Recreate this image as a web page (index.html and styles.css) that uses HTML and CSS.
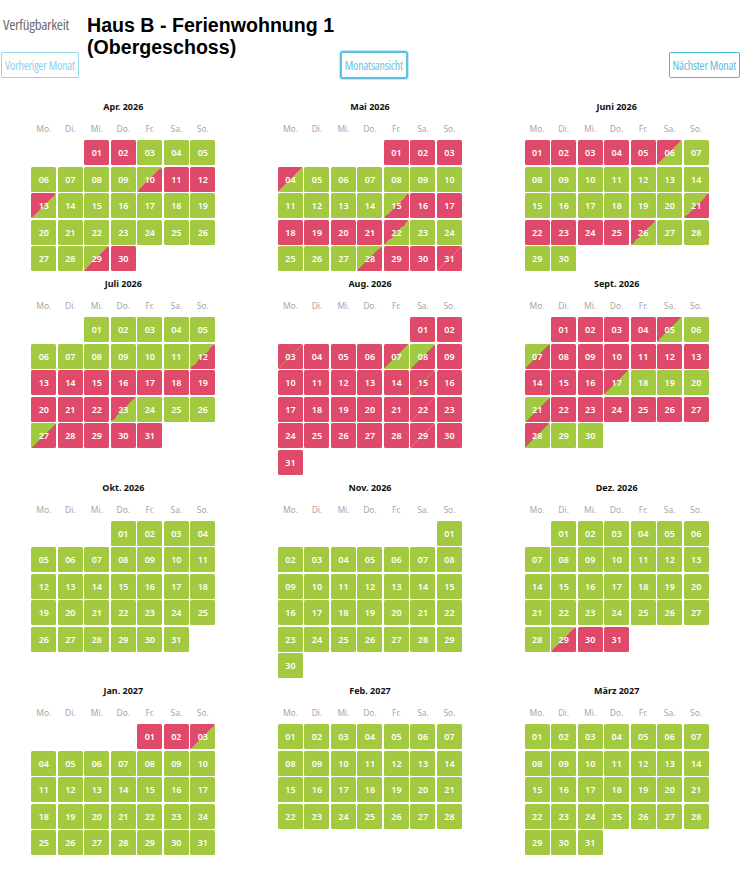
FILE: index.html
```html
<!DOCTYPE html>
<html lang="de">
<head>
<meta charset="utf-8">
<title>Verfügbarkeit</title>
<link rel="stylesheet" href="styles.css">
</head>
<body>
<header class="top">
  <div class="label">Verfügbarkeit</div>
  <h1 class="title">Haus B - Ferienwohnung 1 (Obergeschoss)</h1>
</header>
<nav class="nav">
  <button class="btn btn-prev">Vorheriger Monat</button>
  <button class="btn btn-view">Monatsansicht</button>
  <button class="btn btn-next">Nächster Monat</button>
</nav>
<main class="months">

<section class="month">
  <h2 class="m-title">Apr. 2026</h2>
  <div class="wd"><span>Mo.</span><span>Di.</span><span>Mi.</span><span>Do.</span><span>Fr.</span><span>Sa.</span><span>So.</span></div>
  <div class="days">
    <span class="r c3">01</span><span class="r">02</span><span class="g">03</span><span class="g">04</span><span class="g">05</span>
    <span class="g">06</span><span class="g">07</span><span class="g">08</span><span class="g">09</span><span class="a">10</span><span class="r">11</span><span class="r">12</span>
    <span class="d">13</span><span class="g">14</span><span class="g">15</span><span class="g">16</span><span class="g">17</span><span class="g">18</span><span class="g">19</span>
    <span class="g">20</span><span class="g">21</span><span class="g">22</span><span class="g">23</span><span class="g">24</span><span class="g">25</span><span class="g">26</span>
    <span class="g">27</span><span class="g">28</span><span class="a">29</span><span class="r">30</span>
  </div>
</section>

<section class="month">
  <h2 class="m-title">Mai 2026</h2>
  <div class="wd"><span>Mo.</span><span>Di.</span><span>Mi.</span><span>Do.</span><span>Fr.</span><span>Sa.</span><span>So.</span></div>
  <div class="days">
    <span class="r c5">01</span><span class="r">02</span><span class="r">03</span>
    <span class="d">04</span><span class="g">05</span><span class="g">06</span><span class="g">07</span><span class="g">08</span><span class="g">09</span><span class="g">10</span>
    <span class="g">11</span><span class="g">12</span><span class="g">13</span><span class="g">14</span><span class="a">15</span><span class="r">16</span><span class="r">17</span>
    <span class="r">18</span><span class="r">19</span><span class="r">20</span><span class="r">21</span><span class="d">22</span><span class="g">23</span><span class="g">24</span>
    <span class="g">25</span><span class="g">26</span><span class="g">27</span><span class="a">28</span><span class="r">29</span><span class="r">30</span><span class="x">31</span>
  </div>
</section>

<section class="month">
  <h2 class="m-title">Juni 2026</h2>
  <div class="wd"><span>Mo.</span><span>Di.</span><span>Mi.</span><span>Do.</span><span>Fr.</span><span>Sa.</span><span>So.</span></div>
  <div class="days">
    <span class="r">01</span><span class="r">02</span><span class="r">03</span><span class="r">04</span><span class="r">05</span><span class="d">06</span><span class="g">07</span>
    <span class="g">08</span><span class="g">09</span><span class="g">10</span><span class="g">11</span><span class="g">12</span><span class="g">13</span><span class="g">14</span>
    <span class="g">15</span><span class="g">16</span><span class="g">17</span><span class="g">18</span><span class="g">19</span><span class="g">20</span><span class="a">21</span>
    <span class="r">22</span><span class="r">23</span><span class="r">24</span><span class="r">25</span><span class="d">26</span><span class="g">27</span><span class="g">28</span>
    <span class="g">29</span><span class="g">30</span>
  </div>
</section>

<section class="month">
  <h2 class="m-title">Juli 2026</h2>
  <div class="wd"><span>Mo.</span><span>Di.</span><span>Mi.</span><span>Do.</span><span>Fr.</span><span>Sa.</span><span>So.</span></div>
  <div class="days">
    <span class="g c3">01</span><span class="g">02</span><span class="g">03</span><span class="g">04</span><span class="g">05</span>
    <span class="g">06</span><span class="g">07</span><span class="g">08</span><span class="g">09</span><span class="g">10</span><span class="g">11</span><span class="a">12</span>
    <span class="r">13</span><span class="r">14</span><span class="r">15</span><span class="r">16</span><span class="r">17</span><span class="r">18</span><span class="r">19</span>
    <span class="r">20</span><span class="r">21</span><span class="r">22</span><span class="d">23</span><span class="g">24</span><span class="g">25</span><span class="g">26</span>
    <span class="a">27</span><span class="r">28</span><span class="r">29</span><span class="r">30</span><span class="r">31</span>
  </div>
</section>

<section class="month">
  <h2 class="m-title">Aug. 2026</h2>
  <div class="wd"><span>Mo.</span><span>Di.</span><span>Mi.</span><span>Do.</span><span>Fr.</span><span>Sa.</span><span>So.</span></div>
  <div class="days">
    <span class="r c6">01</span><span class="r">02</span>
    <span class="x">03</span><span class="r">04</span><span class="r">05</span><span class="r">06</span><span class="d">07</span><span class="a">08</span><span class="r">09</span>
    <span class="r">10</span><span class="r">11</span><span class="r">12</span><span class="r">13</span><span class="r">14</span><span class="x">15</span><span class="r">16</span>
    <span class="r">17</span><span class="r">18</span><span class="r">19</span><span class="r">20</span><span class="r">21</span><span class="x">22</span><span class="r">23</span>
    <span class="r">24</span><span class="r">25</span><span class="r">26</span><span class="r">27</span><span class="r">28</span><span class="x">29</span><span class="r">30</span>
    <span class="r">31</span>
  </div>
</section>

<section class="month">
  <h2 class="m-title">Sept. 2026</h2>
  <div class="wd"><span>Mo.</span><span>Di.</span><span>Mi.</span><span>Do.</span><span>Fr.</span><span>Sa.</span><span>So.</span></div>
  <div class="days">
    <span class="r c2">01</span><span class="r">02</span><span class="r">03</span><span class="r">04</span><span class="d">05</span><span class="g">06</span>
    <span class="a">07</span><span class="r">08</span><span class="r">09</span><span class="r">10</span><span class="r">11</span><span class="r">12</span><span class="r">13</span>
    <span class="r">14</span><span class="r">15</span><span class="r">16</span><span class="d">17</span><span class="g">18</span><span class="g">19</span><span class="g">20</span>
    <span class="a">21</span><span class="r">22</span><span class="r">23</span><span class="r">24</span><span class="r">25</span><span class="r">26</span><span class="r">27</span>
    <span class="d">28</span><span class="g">29</span><span class="g">30</span>
  </div>
</section>

<section class="month">
  <h2 class="m-title">Okt. 2026</h2>
  <div class="wd"><span>Mo.</span><span>Di.</span><span>Mi.</span><span>Do.</span><span>Fr.</span><span>Sa.</span><span>So.</span></div>
  <div class="days">
    <span class="g c4">01</span><span class="g">02</span><span class="g">03</span><span class="g">04</span>
    <span class="g">05</span><span class="g">06</span><span class="g">07</span><span class="g">08</span><span class="g">09</span><span class="g">10</span><span class="g">11</span>
    <span class="g">12</span><span class="g">13</span><span class="g">14</span><span class="g">15</span><span class="g">16</span><span class="g">17</span><span class="g">18</span>
    <span class="g">19</span><span class="g">20</span><span class="g">21</span><span class="g">22</span><span class="g">23</span><span class="g">24</span><span class="g">25</span>
    <span class="g">26</span><span class="g">27</span><span class="g">28</span><span class="g">29</span><span class="g">30</span><span class="g">31</span>
  </div>
</section>

<section class="month">
  <h2 class="m-title">Nov. 2026</h2>
  <div class="wd"><span>Mo.</span><span>Di.</span><span>Mi.</span><span>Do.</span><span>Fr.</span><span>Sa.</span><span>So.</span></div>
  <div class="days">
    <span class="g c7">01</span>
    <span class="g">02</span><span class="g">03</span><span class="g">04</span><span class="g">05</span><span class="g">06</span><span class="g">07</span><span class="g">08</span>
    <span class="g">09</span><span class="g">10</span><span class="g">11</span><span class="g">12</span><span class="g">13</span><span class="g">14</span><span class="g">15</span>
    <span class="g">16</span><span class="g">17</span><span class="g">18</span><span class="g">19</span><span class="g">20</span><span class="g">21</span><span class="g">22</span>
    <span class="g">23</span><span class="g">24</span><span class="g">25</span><span class="g">26</span><span class="g">27</span><span class="g">28</span><span class="g">29</span>
    <span class="g">30</span>
  </div>
</section>

<section class="month">
  <h2 class="m-title">Dez. 2026</h2>
  <div class="wd"><span>Mo.</span><span>Di.</span><span>Mi.</span><span>Do.</span><span>Fr.</span><span>Sa.</span><span>So.</span></div>
  <div class="days">
    <span class="g c2">01</span><span class="g">02</span><span class="g">03</span><span class="g">04</span><span class="g">05</span><span class="g">06</span>
    <span class="g">07</span><span class="g">08</span><span class="g">09</span><span class="g">10</span><span class="g">11</span><span class="g">12</span><span class="g">13</span>
    <span class="g">14</span><span class="g">15</span><span class="g">16</span><span class="g">17</span><span class="g">18</span><span class="g">19</span><span class="g">20</span>
    <span class="g">21</span><span class="g">22</span><span class="g">23</span><span class="g">24</span><span class="g">25</span><span class="g">26</span><span class="g">27</span>
    <span class="g">28</span><span class="a">29</span><span class="r">30</span><span class="r">31</span>
  </div>
</section>

<section class="month">
  <h2 class="m-title">Jan. 2027</h2>
  <div class="wd"><span>Mo.</span><span>Di.</span><span>Mi.</span><span>Do.</span><span>Fr.</span><span>Sa.</span><span>So.</span></div>
  <div class="days">
    <span class="r c5">01</span><span class="r">02</span><span class="d">03</span>
    <span class="g">04</span><span class="g">05</span><span class="g">06</span><span class="g">07</span><span class="g">08</span><span class="g">09</span><span class="g">10</span>
    <span class="g">11</span><span class="g">12</span><span class="g">13</span><span class="g">14</span><span class="g">15</span><span class="g">16</span><span class="g">17</span>
    <span class="g">18</span><span class="g">19</span><span class="g">20</span><span class="g">21</span><span class="g">22</span><span class="g">23</span><span class="g">24</span>
    <span class="g">25</span><span class="g">26</span><span class="g">27</span><span class="g">28</span><span class="g">29</span><span class="g">30</span><span class="g">31</span>
  </div>
</section>

<section class="month">
  <h2 class="m-title">Feb. 2027</h2>
  <div class="wd"><span>Mo.</span><span>Di.</span><span>Mi.</span><span>Do.</span><span>Fr.</span><span>Sa.</span><span>So.</span></div>
  <div class="days">
    <span class="g">01</span><span class="g">02</span><span class="g">03</span><span class="g">04</span><span class="g">05</span><span class="g">06</span><span class="g">07</span>
    <span class="g">08</span><span class="g">09</span><span class="g">10</span><span class="g">11</span><span class="g">12</span><span class="g">13</span><span class="g">14</span>
    <span class="g">15</span><span class="g">16</span><span class="g">17</span><span class="g">18</span><span class="g">19</span><span class="g">20</span><span class="g">21</span>
    <span class="g">22</span><span class="g">23</span><span class="g">24</span><span class="g">25</span><span class="g">26</span><span class="g">27</span><span class="g">28</span>
  </div>
</section>

<section class="month">
  <h2 class="m-title">März 2027</h2>
  <div class="wd"><span>Mo.</span><span>Di.</span><span>Mi.</span><span>Do.</span><span>Fr.</span><span>Sa.</span><span>So.</span></div>
  <div class="days">
    <span class="g">01</span><span class="g">02</span><span class="g">03</span><span class="g">04</span><span class="g">05</span><span class="g">06</span><span class="g">07</span>
    <span class="g">08</span><span class="g">09</span><span class="g">10</span><span class="g">11</span><span class="g">12</span><span class="g">13</span><span class="g">14</span>
    <span class="g">15</span><span class="g">16</span><span class="g">17</span><span class="g">18</span><span class="g">19</span><span class="g">20</span><span class="g">21</span>
    <span class="g">22</span><span class="g">23</span><span class="g">24</span><span class="g">25</span><span class="g">26</span><span class="g">27</span><span class="g">28</span>
    <span class="g">29</span><span class="g">30</span><span class="g">31</span>
  </div>
</section>

</main>
</body>
</html>
```
FILE: styles.css
```css
html, body {
  margin: 0;
  padding: 0;
  background: #fff;
}

body {
  width: 743px;
  font-family: "Noto Sans", "Liberation Sans", sans-serif;
}

.top {
  display: flex;
  align-items: flex-start;
  padding-top: 14px;
}

.label {
  width: 84px;
  padding-left: 3px;
  margin-top: 2px;
  font-family: "Open Sans", sans-serif;
  font-stretch: 75%;
  font-size: 15px;
  line-height: 17px;
  letter-spacing: -0.3px;
  color: #6d6d6d;
}

.title {
  width: 300px;
  margin: 0 0 -7px 0;
  font-family: "Liberation Sans", Arial, sans-serif;
  font-size: 19.6px;
  line-height: 22px;
  font-weight: bold;
  color: #000;
}

.nav {
  display: flex;
  justify-content: space-between;
  align-items: center;
  height: 28px;
  padding: 0 3px 0 1px;
}

.btn {
  box-sizing: border-box;
  height: 26px;
  padding: 0 3px;
  background: #fff;
  border: 1px solid #47b7dc;
  border-radius: 2px;
  font-family: "Open Sans", sans-serif;
  font-stretch: 75%;
  font-size: 12px;
  letter-spacing: -0.2px;
  color: #5bbde0;
}

.btn-prev {
  border-color: #97d6eb;
  color: #8fd1e8;
}

.btn-view {
  height: 28px;
  border: 2px solid #5cc2e4;
  border-radius: 3px;
  box-shadow: 0 0 0 1px rgba(120, 200, 230, 0.45);
  color: #6cbfe0;
}

.months {
  display: grid;
  grid-template-columns: repeat(3, 1fr);
  width: 740px;
  margin-top: 22px;
}

.month {
  display: flex;
  flex-direction: column;
  align-items: center;
  padding-bottom: 7px;
}

.m-title {
  margin: 0 0 10px 0;
  height: 12px;
  font-size: 9px;
  line-height: 12px;
  font-weight: bold;
  color: #111;
}

.wd {
  display: grid;
  grid-template-columns: repeat(7, 25px);
  column-gap: 1.5px;
  height: 12px;
  margin-bottom: 5px;
}

.wd span {
  text-align: center;
  font-size: 8.5px;
  line-height: 12px;
  color: #a8a8a8;
}

.days {
  display: grid;
  grid-template-columns: repeat(7, 25px);
  grid-auto-rows: 25px;
  gap: 1.5px;
}

.days span {
  display: flex;
  align-items: center;
  justify-content: center;
  border-radius: 1.5px;
  font-size: 9px;
  font-weight: 600;
  color: #fff;
}

.g { background: #a3c940; }
.r { background: #df4a6b; }
.a { background: linear-gradient(to bottom right, #a3c940 50%, #df4a6b 50%); }
.d { background: linear-gradient(to bottom right, #df4a6b 50%, #a3c940 50%); }
.x { background: linear-gradient(to bottom right, #df4a6b calc(50% - 0.6px), #d88560 50%, #df4a6b calc(50% + 0.6px)); }

.c2 { grid-column-start: 2; }
.c3 { grid-column-start: 3; }
.c4 { grid-column-start: 4; }
.c5 { grid-column-start: 5; }
.c6 { grid-column-start: 6; }
.c7 { grid-column-start: 7; }
```
